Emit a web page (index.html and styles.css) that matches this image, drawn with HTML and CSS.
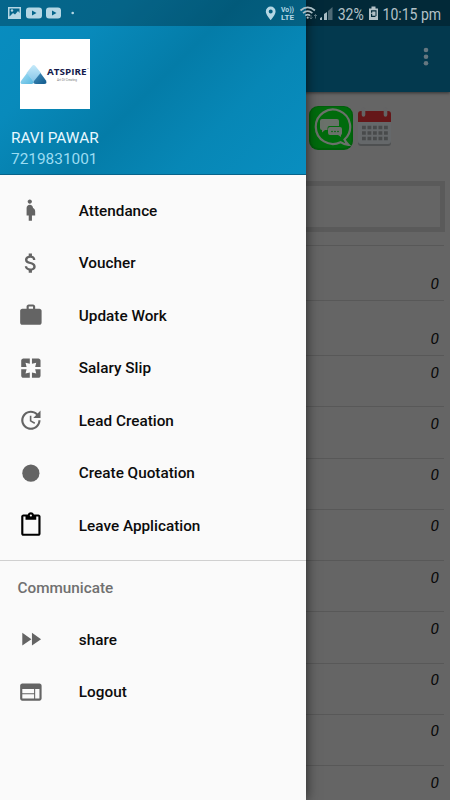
FILE: index.html
```html
<!DOCTYPE html>
<html lang="en">
<head>
<meta charset="utf-8">
<title>Atspire</title>
<link rel="stylesheet" href="styles.css">
</head>
<body>
<div class="phone">
  <main class="screen">
    <header class="appbar">
      <svg class="more" viewBox="0 0 6 20"><circle cx="3" cy="3" r="2.3"/><circle cx="3" cy="9.7" r="2.3"/><circle cx="3" cy="16.3" r="2.3"/></svg>
    </header>
    <section class="shortcuts">
      <svg class="chat" viewBox="0 0 44 44">
        <rect width="44" height="44" rx="9" fill="#005f0b"/>
        <rect x="1.5" y="1" width="41" height="41" rx="8" fill="#006b0c"/>
        <path d="M35.5 33.5A17.2 17.2 0 1 0 31.5 36.2C34 38 37 38.8 39.5 38.8 37.5 37 36.3 35.5 35.5 33.5Z" fill="none" stroke="#6a716a" stroke-width="2.2"/>
        <path d="M13 13h15a2 2 0 0 1 2 2v5H20.500a2 2 0 0 0-2 2v2H16l-3 2.500V24a2 2 0 0 1-2-2v-7a2 2 0 0 1 2-2Z" fill="#6a716a"/>
        <path d="M21 21h10a2 2 0 0 1 2 2V27a2 2 0 0 1-1 2v2l-3-2h-8a2 2 0 0 1-2-2v-4a2 2 0 0 1 2-2Z" fill="#6a716a"/>
        <g fill="#00650b"><circle cx="23" cy="25.500" r=".8"/><circle cx="26" cy="25.500" r=".8"/><circle cx="29" cy="25.500" r=".8"/></g>
      </svg>
      <svg class="calendar" viewBox="0 0 33 39">
        <rect y="6" width="33" height="33" rx="3" fill="#4e5051"/>
        <rect y="5" width="33" height="32" rx="3" fill="#65686a"/>
        <path d="M0 15V7a3 3 0 0 1 3-3h27a3 3 0 0 1 3 3v8Z" fill="#651719"/>
        <path d="M5.500 2v6M27.500 2v6" stroke="#646465" stroke-width="3.600" stroke-linecap="round"/>
        <path d="M4 20.500h26M4 26h26M4 31.500h26" stroke="#484a4b" stroke-width="3.600" stroke-dasharray="3.800 1.700"/>
      </svg>
    </section>
    <div class="frame"></div>
    <ul class="counts">
      <li class="tall">0</li><li class="tall">0</li><li>0</li><li>0</li><li>0</li><li>0</li><li>0</li><li>0</li><li>0</li><li>0</li><li>0</li>
    </ul>
  </main>

  <aside class="drawer">
    <header class="profile">
      <svg class="logo" viewBox="0 0 70 70">
        <defs>
          <linearGradient id="top" x1="0" y1="0" x2="0" y2="1"><stop offset="0" stop-color="#c5eafa"/><stop offset="1" stop-color="#85c5e8"/></linearGradient>
          <linearGradient id="left" x1="0" y1="0" x2="1" y2="1"><stop offset="0" stop-color="#a2def5"/><stop offset="1" stop-color="#55b6df"/></linearGradient>
          <linearGradient id="right" x1="0" y1="0" x2="1" y2="1"><stop offset="0" stop-color="#4590bd"/><stop offset="1" stop-color="#115a8c"/></linearGradient>
        </defs>
        <rect width="70" height="70" fill="#fff"/>
        <path d="M6.500 34 12 27q1.700-2.200 3.400 0L21 34l-7 9Z" fill="url(#top)"/>
        <path d="M7 34 14 43q-.5 2-2.500 2H2.500q-3 0-1.500-3Z" fill="url(#left)"/>
        <path d="M20.500 34 26 41.500q1.500 3.500-2 3.500h-8q-3.500 0-2-3Z" fill="url(#right)"/>
        <text class="brand" x="27" y="36.200" textLength="39.500" lengthAdjust="spacingAndGlyphs">ATSPIRE</text>
        <text class="tm" x="67" y="31">™</text>
        <text class="tagline" x="37" y="41.500" textLength="20" lengthAdjust="spacingAndGlyphs">Art Of Creating</text>
      </svg>
      <div class="name">RAVI PAWAR</div>
      <div class="number">7219831001</div>
    </header>
    <nav class="menu">
      <a class="item"><svg viewBox="0 0 24 24"><path d="M9 4c0-1.110.89-2 2-2s2 .89 2 2-.89 2-2 2-2-.89-2-2zm7 9c-.01-1.340-.83-2.510-2-3 0-1.660-1.340-3-3-3s-3 1.340-3 3v7h2v5h3v-5h3v-4z"/></svg>Attendance</a>
      <a class="item"><svg viewBox="0 0 24 24"><path d="M11.800 10.900c-2.270-.59-3-1.200-3-2.150 0-1.090 1.010-1.850 2.700-1.850 1.780 0 2.440.85 2.500 2.100h2.210c-.07-1.720-1.120-3.300-3.210-3.810V3h-3v2.160c-1.940.42-3.500 1.680-3.500 3.610 0 2.310 1.910 3.460 4.700 4.130 2.500.6 3 1.480 3 2.410 0 .69-.49 1.790-2.700 1.790-2.060 0-2.870-.92-2.980-2.100h-2.200c.12 2.190 1.760 3.420 3.680 3.830V21h3v-2.150c1.950-.37 3.500-1.500 3.500-3.550 0-2.840-2.430-3.810-4.700-4.400z"/></svg>Voucher</a>
      <a class="item"><svg viewBox="0 0 24 24"><path d="M20 6h-4V4c0-1.110-.89-2-2-2h-4c-1.110 0-2 .89-2 2v2H4c-1.110 0-1.990.89-1.990 2L2 19c0 1.110.89 2 2 2h16c1.110 0 2-.89 2-2V8c0-1.110-.89-2-2-2zm-6 0h-4V4h4v2z"/></svg>Update Work</a>
      <a class="item"><svg viewBox="0 0 24 24"><path d="M3 5v6h5L7 7l4 1V3H5c-1.100 0-2 .9-2 2zm5 8H3v6c0 1.100.9 2 2 2h6v-5l-4 1 1-4zm9 4l-4-1v5h6c1.100 0 2-.9 2-2v-6h-5l1 4zm2-14h-6v5l4-1-1 4h5V5c0-1.100-.9-2-2-2z"/></svg>Salary Slip</a>
      <a class="item"><svg viewBox="0 0 24 24"><path d="M21 10.120h-6.780l2.740-2.820c-2.730-2.700-7.150-2.800-9.880-.1-2.730 2.710-2.730 7.080 0 9.790 2.730 2.710 7.150 2.710 9.880 0C18.320 15.650 19 14.080 19 12.100h2c0 1.980-.88 4.550-2.640 6.290-3.510 3.480-9.210 3.480-12.720 0-3.500-3.470-3.530-9.110-.02-12.580 3.510-3.470 9.140-3.470 12.650 0L21 3v7.120zM12.500 8v4.250l3.500 2.080-.72 1.210L11 13V8h1.500z"/></svg>Lead Creation</a>
      <a class="item"><svg viewBox="0 0 24 24"><circle cx="12" cy="12" r="8"/></svg>Create Quotation</a>
      <a class="item"><svg class="black" viewBox="0 0 24 24"><path d="M19 2h-4.180C14.400.84 13.300 0 12 0c-1.300 0-2.400.84-2.820 2H5c-1.100 0-2 .9-2 2v16c0 1.100.9 2 2 2h14c1.100 0 2-.9 2-2V4c0-1.100-.9-2-2-2zm-7 0c.55 0 1 .45 1 1s-.45 1-1 1-1-.45-1-1 .45-1 1-1zm7 18H5V4h2v3h10V4h2v16z"/></svg>Leave Application</a>
      <h2 class="heading">Communicate</h2>
      <a class="item"><svg viewBox="0 0 24 24"><path d="M4 18l8.500-6L4 6v12zm9-12v12l8.500-6L13 6z"/></svg>share</a>
      <a class="item"><svg viewBox="0 0 24 24"><path d="M20 4H4c-1.100 0-1.990.9-1.990 2L2 18c0 1.100.9 2 2 2h16c1.100 0 2-.9 2-2V6c0-1.100-.9-2-2-2zm-5 14H4v-4h11v4zm0-5H4V9h11v4zm5 5h-4V9h4v9z"/></svg>Logout</a>
    </nav>
  </aside>

  <svg class="statusbar" viewBox="0 0 450 26">
    <g fill="#b5d7e4">
      <path fill-rule="evenodd" d="M8 7h13v12H8ZM9.500 8.500v8l3.500-3.500 2 1.500 3-3.500 1.500 2V8.500Z"/>
      <circle cx="12" cy="10.500" r="1.200"/>
      <path fill-rule="evenodd" d="M29 7.500h10q3 0 3 3v5q0 3-3 3H29q-3 0-3-3v-5q0-3 3-3Zm3 3v5l4.500-2.500ZM49 7.500h9q3 0 3 3v5q0 3-3 3h-9q-3 0-3-3v-5q0-3 3-3Zm3 3v5l4.500-2.500Z"/>
      <circle cx="72.700" cy="13" r="1.300"/>
      <path fill-rule="evenodd" d="M270.700 6.500a4.900 4.900 0 0 0-4.900 4.900c0 3.500 4.900 8.600 4.900 8.600s4.900-5.100 4.900-8.600a4.900 4.900 0 0 0-4.900-4.900Zm0 3a2 2 0 1 1 0 4 2 2 0 0 1 0-4Z"/>
      <text class="volte" x="281" y="12.300" textLength="13" lengthAdjust="spacingAndGlyphs">Vo))</text>
      <text class="volte" x="281" y="20" textLength="13" lengthAdjust="spacingAndGlyphs">LTE</text>
    </g>
    <g fill="none" stroke="#a9bdc5" stroke-width="1.700">
      <path d="M300.500 10.500q7.200-6.200 14.400 0M303 13.200q4.700-4 9.400 0M305.300 15.700q2.400-2 4.800 0"/>
    </g>
    <circle cx="307.700" cy="17.700" r="1.100" fill="#a9bdc5"/>
    <path d="M311 15v4m-1.500-1.500L311 19l1.500-1.500M315.500 18.500v-4M314 16l1.500-1.500L317 16" fill="none" stroke="#58747f"/>
    <path d="M320 20v-2l2-1V20ZM324 20v-6l3-2v8Z" fill="#a9bdc5"/>
    <path d="M328 20v-9l4.500-4V20Z" fill="#4f6a75"/>
    <g fill="#b3c1c7">
      <text class="clock" transform="translate(337.700 20) scale(.825 1)">32%</text>
      <path fill-rule="evenodd" d="M369 8.500h2.500v-2h4v2h2.500V20h-9ZM371 10.300v2.500h1.200v-1.300h3.300v4.500h1v-5.700ZM371 13.800v3.200h4.500v-1.200h-3.300v-2Z"/>
      <text class="clock" transform="translate(382.500 20) scale(.825 1)">10:15 pm</text>
    </g>
  </svg>
</div>
</body>
</html>
```

FILE: styles.css
```css
* { box-sizing: border-box; }

body {
  margin: 0;
  font-family: Roboto, "Liberation Sans", sans-serif;
}

.phone {
  position: relative;
  width: 450px;
  height: 800px;
  overflow: hidden;
  background: #656565;
}

.screen {
  height: 100%;
  display: flex;
  flex-direction: column;
}

.appbar {
  flex: none;
  height: 92px;
  padding: 47px 21px 0 0;
  display: flex;
  justify-content: flex-end;
  align-items: flex-start;
  background: #03394e;
  box-shadow: 0 1px 3px rgba(0, 0, 0, .5);
}

.more {
  width: 6px;
  height: 20px;
  fill: #657780;
}

.shortcuts {
  flex: none;
  height: 89px;
  padding: 14px 0 0 309px;
  display: flex;
  align-items: flex-start;
  gap: 5px;
}

.chat { width: 44px; height: 44px; }
.calendar { width: 33px; height: 39px; margin-top: 1px; }

.frame {
  flex: none;
  height: 51px;
  margin: 0 5px;
  border: 5px solid #5a5a5a;
}

.counts {
  flex: none;
  margin: 13px 6px 0;
  padding: 0;
  list-style: none;
  font-size: 15.500px;
  font-style: italic;
  line-height: 18px;
  color: #080808;
}

.counts li {
  height: 51.250px;
  padding: 7.700px 5px 0 0;
  border-top: 1px solid #585858;
  text-align: right;
}

.counts .tall {
  height: 55px;
  padding-top: 29px;
}

.drawer {
  position: absolute;
  top: 0;
  left: 0;
  width: 306px;
  height: 100%;
  display: flex;
  flex-direction: column;
  background: #fafafa;
  box-shadow: 0 0 12px rgba(0, 0, 0, .65);
}

.profile {
  flex: none;
  height: 175px;
  padding: 39px 0 0 11px;
  background: linear-gradient(135deg, #088dc0 0%, #088abb 25%, #047ca8 50%, #0787b6 72%, #098ec0 100%);
  border-bottom: 1px solid #07638a;
}

.logo {
  display: block;
  width: 70px;
  height: 70px;
  margin-left: 8.500px;
}

.brand {
  font: 700 9.500px "Open Sans", sans-serif;
  fill: #151b4c;
}

.tm { font-size: 3px; fill: #555; }
.tagline { font-size: 3.500px; fill: #777; }

.name {
  margin-top: 18px;
  font-size: 15.400px;
  line-height: 22px;
  color: #e8f8ff;
}

.number {
  font-size: 15.400px;
  line-height: 20px;
  color: #9bdcf2;
}

.menu {
  padding-top: 9.300px;
  display: flex;
  flex-direction: column;
}

.item {
  height: 52.500px;
  padding-left: 17.500px;
  display: flex;
  align-items: center;
  gap: 35.600px;
  font-size: 15.300px;
  font-weight: 500;
  color: #0c0c0c;
}

.item svg {
  width: 25.750px;
  height: 26.250px;
  margin-top: -.5px;
  fill: #646464;
}

.item .black { fill: #000; }

.heading {
  height: 53.800px;
  margin: 8px 0 0;
  padding-left: 17.500px;
  border-top: 1px solid #d0d0d0;
  font-size: 15.300px;
  font-weight: 500;
  line-height: 54px;
  color: #707070;
}

.statusbar {
  position: absolute;
  top: 0;
  left: 0;
  width: 450px;
  height: 26px;
  background: rgba(0, 0, 0, .27);
}

.volte { font-size: 6.800px; font-weight: 700; }
.clock { font-size: 17px; }
```
